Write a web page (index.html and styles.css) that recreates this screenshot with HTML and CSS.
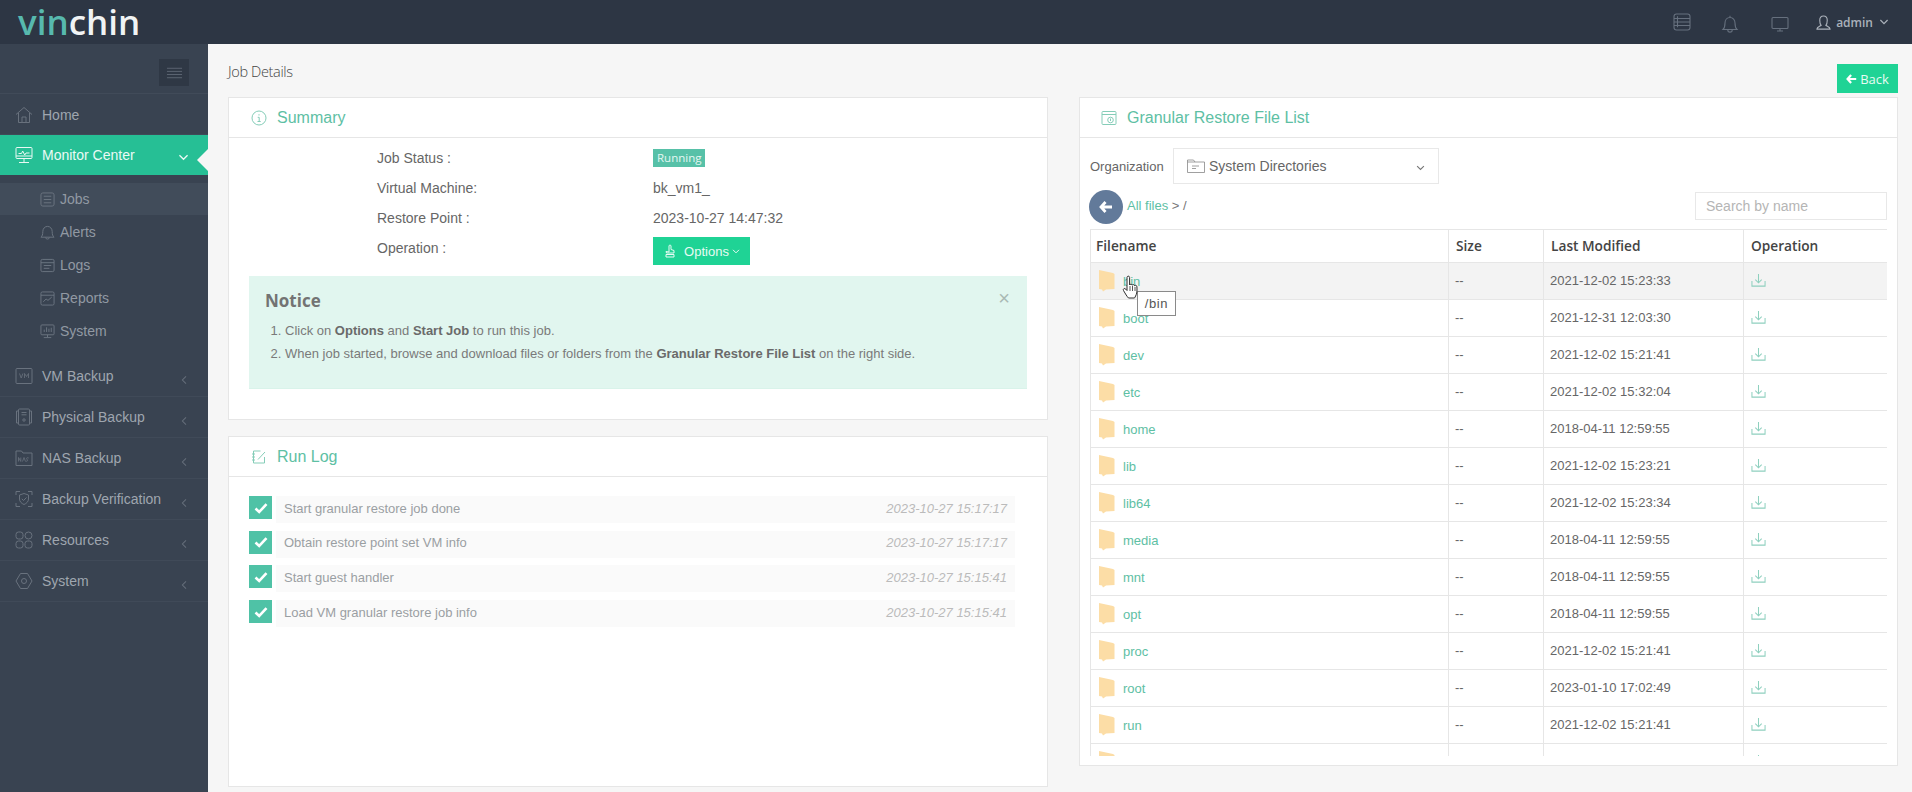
FILE: index.html
```html
<!DOCTYPE html>
<html lang="en">
<head>
<meta charset="utf-8">
<title>Vinchin - Job Details</title>
<link rel="stylesheet" href="styles.css">
</head>
<body>
<svg class="sprite" xmlns="http://www.w3.org/2000/svg">
  <symbol id="i-folder" viewBox="0 0 16 22"><path d="M0 0 L7 1.500 L14 3 L15.500 4 L15.500 19 L7 19.500 L4 21.500 L3 19.500 L0 19 Z" fill="#fcdda6"/></symbol>
  <symbol id="i-dl" viewBox="0 0 16 16"><path d="M8 1v9M4.600 7 8 10.400 11.400 7M1 8.500v5.500h14V8.500" fill="none" stroke="currentColor" stroke-width="1.100"/></symbol>
  <symbol id="i-left" viewBox="0 0 10 12"><path d="M7.500 1.500 3 6l4.500 4.500" fill="none" stroke="currentColor" stroke-width="1.300"/></symbol>
  <symbol id="i-down" viewBox="0 0 12 10"><path d="M1.500 2.500 6 7l4.500-4.500" fill="none" stroke="currentColor" stroke-width="1.500"/></symbol>
  <symbol id="i-check" viewBox="0 0 14 12"><path d="M1.500 6.500 5.200 10 12.500 2.200" fill="none" stroke="#fff" stroke-width="2.600"/></symbol>
  <symbol id="i-arrow" viewBox="0 0 14 12"><path d="M6.500 1 2 6l4.500 5M2.500 6H13" fill="none" stroke="currentColor" stroke-width="2.800"/></symbol>
</svg>

<header class="topbar">
  <div class="logo"><span class="logo-vin">vin</span><span class="logo-chin">chin</span></div>
  <div class="top-tools">
    <svg class="tool-icon" viewBox="0 0 18 18"><rect x="1" y="1" width="16" height="16" rx="2.500"/><path d="M1 5.500h16M1 9h16M1 12.500h16M4.500 3.300v11"/></svg>
    <svg class="tool-icon tool-bell" viewBox="0 0 18 18"><path d="M2 14.500c1.600-1.500 2-3 2-6.500 0-3 2-5.500 5-5.500s5 2.500 5 5.500c0 3.500.4 5 2 6.500zM9 .8v1.700M6.800 15c0 2.800 4.400 2.800 4.400 0"/></svg>
    <svg class="tool-icon tool-monitor" viewBox="0 0 18 18"><rect x="1" y="2.500" width="16" height="11" rx="1"/><path d="M9 13.500v2M6 16h6"/></svg>
    <div class="user">
      <svg class="user-icon" viewBox="0 0 16 16"><path d="M1 15c0-2.500 3-2.800 4.500-4C4 9.500 4 7.500 4 5.500 4 2.800 5.500 1 8 1s4 1.800 4 4.500c0 2 0 4-1.500 5.500 1.500 1.200 4.500 1.500 4.500 4z"/></svg>
      <span>admin</span>
      <svg class="user-chev"><use href="#i-down"/></svg>
    </div>
  </div>
</header>

<div class="shell">
  <aside class="sidebar">
    <div class="toggle-row">
      <div class="toggle"><svg viewBox="0 0 18 12"><path d="M1 1h16M1 4.300h16M1 7.600h16M1 11h16"/></svg></div>
    </div>
    <nav>
      <a class="nav-item nav-home">
        <svg class="nav-icon" viewBox="0 0 18 18"><path d="M1 8.500 9 1.500l8 7M3.500 7v9.500h11V7M7 16.500V11h4v5.500"/></svg>
        <span>Home</span>
      </a>
      <a class="nav-item active">
        <svg class="nav-icon" viewBox="0 0 18 18"><rect x="1" y="1.500" width="16" height="11" rx="1"/><path d="M3.500 7.500h3l1.200-2.500 2 4 1.300-2h3.500M1 10h16M9 12.500V16M4 16.500h10"/></svg>
        <span>Monitor Center</span>
        <svg class="chev chev-down"><use href="#i-down"/></svg>
      </a>
      <div class="sub-nav">
        <a class="sub-item current">
          <svg class="sub-icon" viewBox="0 0 16 16"><rect x="1" y="1" width="14" height="14" rx="2"/><path d="M4 4.500h8M4 8h8M4 11.500h8"/></svg>
          <span>Jobs</span>
        </a>
        <a class="sub-item">
          <svg class="sub-icon" viewBox="0 0 16 16"><path d="M1 13c1.500-1.300 2-2.800 2-6 0-3 2-5.500 5-5.500s5 2.500 5 5.500c0 3.200.5 4.700 2 6zM6 13.500c0 2 4 2 4 0"/></svg>
          <span>Alerts</span>
        </a>
        <a class="sub-item">
          <svg class="sub-icon" viewBox="0 0 16 16"><rect x="1" y="1.500" width="14" height="13" rx="1.500"/><path d="M1 5h14M4 8h8M4 11h6"/></svg>
          <span>Logs</span>
        </a>
        <a class="sub-item">
          <svg class="sub-icon" viewBox="0 0 16 16"><rect x="1" y="1" width="14" height="14" rx="1.500"/><path d="M1 4.500h14M3.500 11.500l3-3 2 1.500 4-3.500"/></svg>
          <span>Reports</span>
        </a>
        <a class="sub-item">
          <svg class="sub-icon" viewBox="0 0 16 16"><rect x="1" y="1" width="14" height="10.500" rx="1"/><path d="M4.500 8.500V6M7 8.500V3.500M9.500 8.500V5M12 8.500V4M8 11.500V14M4 14.500h8"/></svg>
          <span>System</span>
        </a>
      </div>
      <a class="nav-item">
        <svg class="nav-icon" viewBox="0 0 18 18"><rect x="1" y="1.500" width="16" height="15" rx="1"/><path class="thin" d="M4.500 6.500 6.200 11l1.700-4.500M9.500 11V6.500l2 3 2-3V11"/></svg>
        <span>VM Backup</span>
        <svg class="chev"><use href="#i-left"/></svg>
      </a>
      <a class="nav-item">
        <svg class="nav-icon" viewBox="0 0 18 18"><rect x="3.500" y="1" width="11" height="16" rx="1"/><path d="M3.500 3H1.500v12h2M14.500 3h2v12h-2M6.500 4.500h5M6.500 6.800h5"/><circle cx="9" cy="12" r="1.200"/></svg>
        <span>Physical Backup</span>
        <svg class="chev"><use href="#i-left"/></svg>
      </a>
      <a class="nav-item">
        <svg class="nav-icon" viewBox="0 0 18 18"><path d="M1 2h5.500l1.500 2h9v12.500H1z"/><path class="thin" d="M3.500 12.500V8.500l2.300 4V8.500M7.500 12.500 9 8.500l1.500 4M13.700 9c-1.500-.8-2.700 0-1.700 1.300s.5 2.400-1.200 1.800"/></svg>
        <span>NAS Backup</span>
        <svg class="chev"><use href="#i-left"/></svg>
      </a>
      <a class="nav-item">
        <svg class="nav-icon" viewBox="0 0 18 18"><path d="M1 5V1.500h4M13 1.500h4V5M1 13v3.500h4M13 16.500h4V13M9 3.500l4.500 1.500v4c0 2.500-2 4.500-4.500 5.500-2.500-1-4.500-3-4.500-5.500V5zM6.800 8.800 8.500 10.500l3-3"/></svg>
        <span>Backup Verification</span>
        <svg class="chev"><use href="#i-left"/></svg>
      </a>
      <a class="nav-item">
        <svg class="nav-icon" viewBox="0 0 18 18"><rect x="1" y="1" width="7" height="7" rx="2.500"/><circle cx="13.500" cy="4.500" r="3.500"/><rect x="1" y="10" width="7" height="7" rx="2.500"/><rect x="10" y="10" width="7" height="7" rx="2.500"/></svg>
        <span>Resources</span>
        <svg class="chev"><use href="#i-left"/></svg>
      </a>
      <a class="nav-item">
        <svg class="nav-icon" viewBox="0 0 18 18"><path d="M5.500 1.500h7L17 9l-4.500 7.500h-7L1 9z" stroke-linejoin="round"/><circle cx="9" cy="9" r="2.500"/></svg>
        <span>System</span>
        <svg class="chev"><use href="#i-left"/></svg>
      </a>
    </nav>
    <div class="active-arrow"></div>
  </aside>

  <main class="content">
    <div class="page-head">
      <h1>Job Details</h1>
      <a class="back-btn"><svg class="back-arrow"><use href="#i-arrow"/></svg>Back</a>
    </div>
    <div class="columns">
      <div class="col-left">
        <section class="card summary-card">
          <div class="card-head">
            <svg class="card-icon" viewBox="0 0 16 16"><circle cx="8" cy="8" r="7"/><path d="M8 4.200v1.300M6.700 7.300H8.200v4M6.500 11.500h3.200"/></svg>
            <h2>Summary</h2>
          </div>
          <div class="summary-body">
            <dl class="details">
              <dt>Job Status :</dt><dd><span class="badge">Running</span></dd>
              <dt>Virtual Machine:</dt><dd>bk_vm1_</dd>
              <dt>Restore Point :</dt><dd>2023-10-27 14:47:32</dd>
              <dt>Operation :</dt>
              <dd><a class="options-btn">
                <svg class="options-icon" viewBox="0 0 14 14"><path d="M6 8V2c0-1.300 2-1.300 2 0v3.500l3 1V9H3.500L3 7.500 6 8zM3 10.500h8v2.500H3z"/></svg>
                Options
                <svg class="options-chev"><use href="#i-down"/></svg>
              </a></dd>
            </dl>
            <div class="notice">
              <span class="notice-close">×</span>
              <h3>Notice</h3>
              <ol>
                <li>Click on <b>Options</b> and <b>Start Job</b> to run this job.</li>
                <li>When job started, browse and download files or folders from the <b>Granular Restore File List</b> on the right side.</li>
              </ol>
            </div>
          </div>
        </section>
        <section class="card log-card">
          <div class="card-head">
            <svg class="card-icon" viewBox="0 0 16 16"><path d="M13.500 8v6h-11V2h7M1 5h3M1 8h3M1 11h3M7 10.500l7-7.500"/></svg>
            <h2>Run Log</h2>
          </div>
          <ul class="log-list">
            <li><span class="log-check"><svg><use href="#i-check"/></svg></span><div class="log-row"><span>Start granular restore job done</span><time>2023-10-27 15:17:17</time></div></li>
            <li><span class="log-check"><svg><use href="#i-check"/></svg></span><div class="log-row"><span>Obtain restore point set VM info</span><time>2023-10-27 15:17:17</time></div></li>
            <li><span class="log-check"><svg><use href="#i-check"/></svg></span><div class="log-row"><span>Start guest handler</span><time>2023-10-27 15:15:41</time></div></li>
            <li><span class="log-check"><svg><use href="#i-check"/></svg></span><div class="log-row"><span>Load VM granular restore job info</span><time>2023-10-27 15:15:41</time></div></li>
          </ul>
        </section>
      </div>

      <section class="card files-card">
        <div class="card-head">
          <svg class="card-icon files-icon" viewBox="0 0 16 16"><rect x="1" y="1.500" width="14" height="13" rx="1"/><path d="M1 4.500h14"/><circle cx="9.500" cy="10" r="2.800"/><path d="M9.500 8.500v2.500"/></svg>
          <h2>Granular Restore File List</h2>
        </div>
        <div class="org-row">
          <label>Organization</label>
          <div class="org-select">
            <svg class="org-folder" viewBox="0 0 18 14"><path d="M.5 13V1h6l1.500 2h9.500v10.500H.5zM.5 3H8M5 7h7M5 9.500h4"/></svg>
            <span>System Directories</span>
            <svg class="org-chev"><use href="#i-down"/></svg>
          </div>
        </div>
        <div class="crumb-row">
          <a class="round-back"><svg><use href="#i-arrow"/></svg></a>
          <div class="crumbs"><a>All files</a> &gt; /</div>
          <input class="search" type="text" placeholder="Search by name">
        </div>
        <div class="table-clip">
          <table class="files">
            <colgroup><col class="c-name"><col class="c-size"><col class="c-date"><col class="c-op"></colgroup>
            <thead><tr><th>Filename</th><th>Size</th><th>Last Modified</th><th>Operation</th></tr></thead>
            <tbody>
              <tr class="hover"><td><svg class="folder"><use href="#i-folder"/></svg><a>bin</a></td><td>--</td><td>2021-12-02 15:23:33</td><td><svg class="dl"><use href="#i-dl"/></svg></td></tr>
              <tr><td><svg class="folder"><use href="#i-folder"/></svg><a>boot</a></td><td>--</td><td>2021-12-31 12:03:30</td><td><svg class="dl"><use href="#i-dl"/></svg></td></tr>
              <tr><td><svg class="folder"><use href="#i-folder"/></svg><a>dev</a></td><td>--</td><td>2021-12-02 15:21:41</td><td><svg class="dl"><use href="#i-dl"/></svg></td></tr>
              <tr><td><svg class="folder"><use href="#i-folder"/></svg><a>etc</a></td><td>--</td><td>2021-12-02 15:32:04</td><td><svg class="dl"><use href="#i-dl"/></svg></td></tr>
              <tr><td><svg class="folder"><use href="#i-folder"/></svg><a>home</a></td><td>--</td><td>2018-04-11 12:59:55</td><td><svg class="dl"><use href="#i-dl"/></svg></td></tr>
              <tr><td><svg class="folder"><use href="#i-folder"/></svg><a>lib</a></td><td>--</td><td>2021-12-02 15:23:21</td><td><svg class="dl"><use href="#i-dl"/></svg></td></tr>
              <tr><td><svg class="folder"><use href="#i-folder"/></svg><a>lib64</a></td><td>--</td><td>2021-12-02 15:23:34</td><td><svg class="dl"><use href="#i-dl"/></svg></td></tr>
              <tr><td><svg class="folder"><use href="#i-folder"/></svg><a>media</a></td><td>--</td><td>2018-04-11 12:59:55</td><td><svg class="dl"><use href="#i-dl"/></svg></td></tr>
              <tr><td><svg class="folder"><use href="#i-folder"/></svg><a>mnt</a></td><td>--</td><td>2018-04-11 12:59:55</td><td><svg class="dl"><use href="#i-dl"/></svg></td></tr>
              <tr><td><svg class="folder"><use href="#i-folder"/></svg><a>opt</a></td><td>--</td><td>2018-04-11 12:59:55</td><td><svg class="dl"><use href="#i-dl"/></svg></td></tr>
              <tr><td><svg class="folder"><use href="#i-folder"/></svg><a>proc</a></td><td>--</td><td>2021-12-02 15:21:41</td><td><svg class="dl"><use href="#i-dl"/></svg></td></tr>
              <tr><td><svg class="folder"><use href="#i-folder"/></svg><a>root</a></td><td>--</td><td>2023-01-10 17:02:49</td><td><svg class="dl"><use href="#i-dl"/></svg></td></tr>
              <tr><td><svg class="folder"><use href="#i-folder"/></svg><a>run</a></td><td>--</td><td>2021-12-02 15:21:41</td><td><svg class="dl"><use href="#i-dl"/></svg></td></tr>
              <tr><td><svg class="folder"><use href="#i-folder"/></svg></td><td></td><td></td><td><svg class="dl"><use href="#i-dl"/></svg></td></tr>
            </tbody>
          </table>
          <div class="tooltip">/bin</div>
          <svg class="cursor" viewBox="0 0 18 25"><path d="M5 2.500c0-1.800 2.600-1.800 2.600 0V10c.5-1.200 2.400-1 2.500.2.600-1 2.300-.8 2.400.5.800-.8 2.300-.4 2.400 1 .2 3 .2 6-.7 8-.8 1.900-1.700 3.300-1.700 3.300H6.500C5 21.500 3.500 19 1.500 15.500c-.9-1.600 1.100-2.800 2.300-1.300L5 15.500z" fill="#fff" stroke="#2b2b2b" stroke-width="1" stroke-linejoin="round"/><path d="M8 11v5M10.500 11v5M13 12v4" fill="none" stroke="#2b2b2b" stroke-width=".8"/></svg>
        </div>
      </section>
    </div>
  </main>
</div>
</body>
</html>
```

FILE: styles.css
```css
* { box-sizing: border-box; }
html, body { margin: 0; height: 100%; overflow: hidden; }
body { font-family: "Liberation Sans", Arial, sans-serif; font-size: 14px; color: #666; background: #f6f6f6; }
.sprite { display: none; }
a { text-decoration: none; color: inherit; }

.topbar { height: 44px; background: #2d3644; display: flex; align-items: center; justify-content: space-between; padding: 0 23px 0 18px; }
.logo { font-family: "Open Sans", sans-serif; font-size: 35px; font-weight: 600; line-height: 44px; height: 44px; }
.logo-vin { color: #57b9ae; }
.logo-chin { color: #f0f3f4; }
.top-tools { display: flex; align-items: center; }
.tool-icon { width: 18px; height: 18px; fill: none; stroke: #66707e; stroke-width: 1.100; margin-right: 30px; }
.tool-bell { margin-right: 32px; margin-top: 3px; }
.tool-monitor { margin-right: 27px; margin-top: 3px; }
.user { display: flex; align-items: center; color: #aab1ba; font-family: "Open Sans", sans-serif; font-size: 12px; font-weight: 600; }
.user-icon { width: 15px; height: 15px; fill: none; stroke: #aab1ba; stroke-width: 1.200; margin-right: 5px; }
.user-chev { width: 10px; height: 8px; margin-left: 6px; color: #aab1ba; }

.shell { display: flex; height: 748px; }
.sidebar { width: 208px; background: #394351; position: relative; flex: none; }
.toggle-row { height: 50px; display: flex; justify-content: flex-end; padding: 15px 19px 0 0; border-bottom: 1px solid #414b59; }
.toggle { width: 30px; height: 27px; background: #2f3845; display: flex; align-items: center; justify-content: center; }
.toggle svg { width: 17px; height: 12px; fill: none; stroke: #5d6673; stroke-width: 1; }

.nav-item { display: flex; align-items: center; height: 41px; padding-left: 15px; color: #9fa6af; border-bottom: 1px solid #404a58; position: relative; }
.nav-home { padding-top: 2px; }
.nav-item span { margin-left: 9px; }
.nav-icon { width: 18px; height: 18px; fill: none; stroke: #69727e; stroke-width: 1; flex: none; margin-top: -1px; }
.nav-icon .thin { stroke-width: .8; }
.chev { width: 8px; height: 10px; color: #656e7a; position: absolute; left: 180px; top: 19px; }
.nav-item.active { background: #26bf95; color: #eafaf5; height: 40px; border-bottom: 0; }
.nav-item.active .nav-icon { stroke: #e9f9f4; }
.chev-down { width: 11px; height: 9px; color: #e9f9f4; left: 178px; top: 18px; }
.sub-nav { padding: 8px 0; }
.sub-item { display: flex; align-items: center; height: 33px; padding: 0 0 1px 40px; color: #9199a3; }
.sub-item span { margin-left: 5px; }
.sub-item.current { background: #414c5a; height: 32px; margin-bottom: 1px; padding-bottom: 0; }
.sub-icon { width: 15px; height: 15px; fill: none; stroke: #6d7682; stroke-width: 1; }
.active-arrow { position: absolute; left: 197px; top: 105px; width: 0; height: 0; border-top: 11px solid transparent; border-bottom: 11px solid transparent; border-right: 11px solid #f6f6f6; }

.content { flex: 1; padding: 0 14px 0 20px; min-width: 0; }
.page-head { height: 53px; display: flex; justify-content: space-between; align-items: flex-start; }
.page-head h1 { margin: 18px 0 0; font-family: "Open Sans", sans-serif; font-size: 14.500px; font-weight: 300; color: #444; letter-spacing: -.35px; line-height: 20px; }
.back-btn { margin-top: 20px; width: 61px; height: 29px; background: #1fd395; color: #e8fbf4; font-family: "Open Sans", sans-serif; font-size: 13px; display: flex; align-items: center; justify-content: center; }
.back-arrow { width: 11px; height: 10px; margin-right: 3px; color: #fff; }

.columns { display: grid; grid-template-columns: 820px 819px; column-gap: 31px; align-items: start; }
.col-left { display: flex; flex-direction: column; gap: 16px; }
.card { background: #fff; border: 1px solid #e6e6e6; }
.card-head { height: 40px; border-bottom: 1px solid #e6e6e6; display: flex; align-items: center; padding-left: 22px; }
.card-head h2 { margin: 0 0 0 10px; font-size: 16px; font-weight: 400; color: #5ec0a4; }
.card-icon { width: 16px; height: 16px; fill: none; stroke: #85cdb8; stroke-width: 1; }
.files-icon { margin-left: -1px; }

.summary-card { height: 323px; }
.summary-body { padding: 0 20px; }
.details { display: grid; grid-template-columns: 404px auto; margin: 5px 0 0; grid-auto-rows: 30px; }
.details dt { padding-left: 128px; align-self: center; color: #666; line-height: 20px; }
.details dd { margin: 0; align-self: center; color: #666; }
.badge { display: inline-block; height: 18px; line-height: 18px; padding: 0 4px; background: #57c1a8; color: #e5f7f2; font-family: "Open Sans", sans-serif; font-size: 11.500px; vertical-align: middle; width: 52px; text-align: center; }
.options-btn { width: 97px; height: 28px; margin-top: 6px; background: #1fd395; color: #e8fbf4; font-size: 13px; display: flex; align-items: center; justify-content: center; }
.options-icon { width: 14px; height: 14px; fill: none; stroke: #e8fbf4; stroke-width: 1; margin-right: 7px; }
.options-chev { width: 8px; height: 7px; margin-left: 3px; color: #e8fbf4; }
.notice { margin-top: 13px; height: 113px; background: #e1f6ef; position: relative; padding: 13px 0 0 16px; border-bottom: 1px solid #d9f3ea; }
.notice h3 { margin: 0; font-family: "Open Sans", sans-serif; font-size: 17px; font-weight: 700; color: #737373; line-height: 23px; }
.notice-close { position: absolute; right: 17px; top: 12px; color: #a9b9b4; font-size: 20px; line-height: 20px; }
.notice ol { margin: 7px 0 0; padding-left: 20px; font-size: 13px; color: #7a7a7a; }
.notice li { line-height: 23px; }
.notice b { color: #6a6a6a; }

.log-card { height: 351px; }
.log-list { list-style: none; margin: 0; padding: 19px 32px 0 20px; }
.log-list li { display: flex; height: 34.700px; }
.log-check { width: 23px; height: 23px; background: #4fc2a6; flex: none; display: flex; align-items: center; justify-content: center; }
.log-check svg { width: 14px; height: 12px; }
.log-row { flex: 1; margin-left: 4px; height: 27px; background: #fafafa; display: flex; justify-content: space-between; align-items: center; padding: 0 8px 3px; font-size: 13px; color: #9a9fa3; }
.log-row time { color: #bbb; font-style: italic; }

.files-card { height: 669px; }
.org-row { display: flex; align-items: center; height: 36px; margin-top: 10px; padding-left: 10px; }
.org-row label { font-size: 13px; color: #666; width: 83px; flex: none; }
.org-select { width: 266px; height: 36px; border: 1px solid #e8e8e8; display: flex; align-items: center; padding-left: 13px; position: relative; color: #666; }
.org-folder { width: 18px; height: 14px; fill: none; stroke: #888; stroke-width: .8; margin-right: 4px; }
.org-chev { width: 9px; height: 8px; color: #777; position: absolute; right: 13px; top: 15px; }
.crumb-row { display: flex; align-items: flex-start; height: 45px; padding: 6px 10px 0 9px; }
.round-back { width: 34px; height: 34px; border-radius: 50%; background: #627a9a; color: #fff; display: flex; align-items: center; justify-content: center; flex: none; }
.round-back svg { width: 14px; height: 12px; }
.crumbs { margin: 7px 0 0 4px; font-size: 13px; color: #777; flex: 1; line-height: 18px; }
.crumbs a { color: #5ec0a4; }
.search { width: 192px; height: 28px; margin-top: 2px; border: 1px solid #e8e8e8; padding: 0 10px; font: 14px "Liberation Sans", Arial, sans-serif; background: #fff; outline: 0; }
.search::placeholder { color: #b5b5b5; opacity: 1; }

.table-clip { position: relative; margin-left: 10px; width: 797px; height: 527px; overflow: hidden; }
.files { width: 797px; table-layout: fixed; border-collapse: collapse; font-size: 13px; }
.c-name { width: 358px; } .c-size { width: 95px; } .c-date { width: 200px; } .c-op { width: 144px; }
.files th { height: 33px; border: 1px solid #e6e6e6; text-align: left; padding: 0 6px 1px 7px; font-family: "Open Sans", sans-serif; font-size: 13.700px; font-weight: 600; color: #444; }
.files th:first-child { padding-left: 5px; }
.files td { height: 37px; border: 1px solid #e6e6e6; padding: 0 6px 1px; color: #666; white-space: nowrap; vertical-align: middle; }
.files tr.hover td { background: #f3f3f3; }
.files td a { color: #5ec0a4; vertical-align: middle; }
.folder { width: 16px; height: 22px; margin: 0 8px 0 2px; vertical-align: middle; }
.dl { width: 15px; height: 15px; color: #8fd0bf; margin: -3px 0 0 1px; vertical-align: middle; }
.tooltip { position: absolute; left: 47px; top: 62px; width: 39px; height: 25px; border: 1px solid #8a8a8a; background: #fff; color: #555; font-size: 13px; letter-spacing: .6px; display: flex; align-items: center; justify-content: center; }
.cursor { position: absolute; left: 32px; top: 46px; width: 18px; height: 25px; }
```
